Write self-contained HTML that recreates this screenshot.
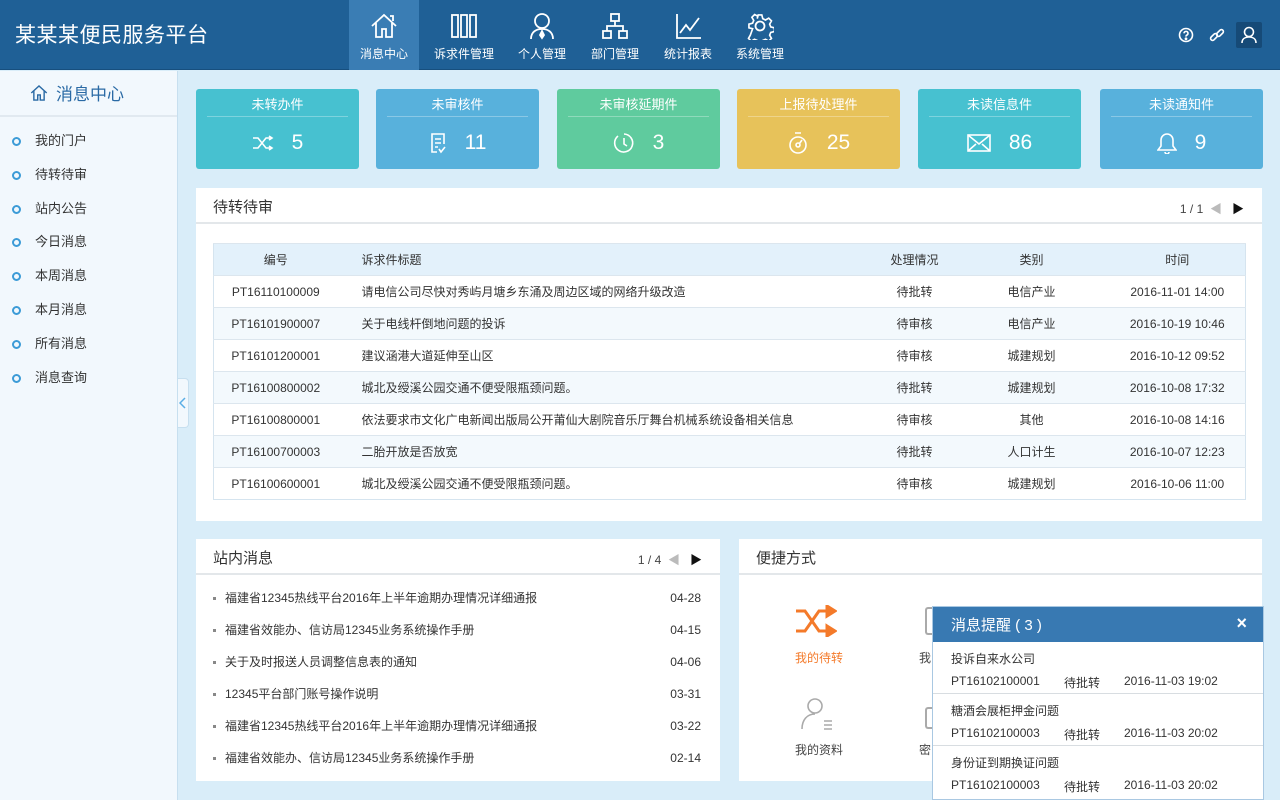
<!DOCTYPE html>
<html><head><meta charset="utf-8">
<style>
*{margin:0;padding:0;box-sizing:border-box}
body{width:1280px;height:800px;overflow:hidden;background:#d9edf9;font-family:"Liberation Sans","Noto Sans CJK SC",sans-serif;color:#333;font-size:13px;position:relative}
.hdr{position:absolute;left:0;top:0;width:1280px;height:70px;background:#1f6096;border-bottom:1px solid #174f7e}
.logo{position:absolute;left:15px;top:19px;color:#fff;font-size:21px;letter-spacing:0.5px}
.nav{position:absolute;top:0;height:70px;color:#fff;font-size:12px;text-align:center}
.nav svg{position:absolute;left:50%;top:12px;transform:translateX(-50%)}
.nav span{position:absolute;left:0;right:0;top:45px}
.side{position:absolute;left:0;top:71px;width:178px;height:729px;background:#f2f8fd;border-right:1px solid #c7dfef}
.stitle{height:46px;border-bottom:2px solid #e1e9f0;color:#2a6aa5;font-size:17px;padding:9px 0 0 56px;position:relative}
.side ul{list-style:none;margin-top:12px}
.side li{height:33.8px;padding-left:35px;position:relative;font-size:13px;color:#333;line-height:24px}
.side li:before{content:"";position:absolute;left:12px;top:8px;width:5px;height:5px;border:2px solid #3c9bd7;border-radius:50%}
.tog{position:absolute;left:178px;top:378px;width:11px;height:50px;background:#f2f8fd;border:1px solid #c7dfef;border-left:none;border-radius:0 4px 4px 0}
.card{position:absolute;top:89px;width:163px;height:80px;border-radius:3px;color:#fff;text-align:center}
.card .t{font-size:13px;margin-top:5px;height:23px;border-bottom:1px solid rgba(255,255,255,.3);margin-left:11px;margin-right:11px;}
.card .n{font-size:21px;margin-top:14px;display:flex;justify-content:center;align-items:center;gap:18px}
.panel{position:absolute;background:#fff}
.ph{height:36px;border-bottom:2px solid #e3e7ea;font-size:15px;padding:8px 0 0 17px;position:relative}
.pg{position:absolute;right:18px;top:12px;font-size:12px;color:#444}
table{border-collapse:collapse;position:absolute;left:17px;top:55px;width:1032px;font-size:12px;table-layout:fixed}
td,th{height:32px;border-top:1px solid #dce6ee;text-align:center;font-weight:normal;color:#333}
th{background:#e3f1fb;height:32px}
tr:nth-child(odd) td{background:#f3f9fd}
tr:nth-child(even) td{background:#fff}
table{border:1px solid #d5e4ef}
.l{text-align:left;padding-left:24px}
.news{list-style:none;padding:0 0 0 17px;margin-top:11px}
.news li{height:32px;line-height:24px;font-size:12px;position:relative;padding-left:12px}
.news li:before{content:"";position:absolute;left:0;top:11px;width:3px;height:3px;background:#888}
.news li b{font-weight:normal;position:absolute;right:19px;top:0}
.pop{position:absolute;left:932px;top:606px;width:332px;height:194px;background:#fff;border:1px solid #a9c8e2}
.poph{height:35px;background:#3879b2;color:#fff;font-size:15px;padding:7px 0 0 18px;position:relative}
.pi{height:52px;border-bottom:1px solid #d8dde1;padding:8px 0 0 18px;font-size:12px}
.pi div:last-child{margin-top:7px;display:flex}
</style></head><body>
<div class="hdr">
<div class="logo">某某某便民服务平台</div>
<div class="nav" style="left:349px;width:70px;background:#3a7db4"><svg width="28" height="28" viewBox="0 0 28 28" fill="none" stroke="#fff" stroke-width="1.8"><path d="M2 14 14 3 26 14M6 11v14h6v-8h4v8h6V11"/><path d="M20 4h3v5"/></svg><span>消息中心</span></div>
<div class="nav" style="left:427px;width:74px"><svg width="28" height="28" viewBox="0 0 28 28" fill="none" stroke="#fff" stroke-width="1.8"><rect x="2" y="3" width="6" height="22"/><rect x="11" y="3" width="6" height="22"/><rect x="20" y="3" width="6" height="22"/></svg><span>诉求件管理</span></div>
<div class="nav" style="left:510px;width:64px"><svg width="28" height="28" viewBox="0 0 28 28" fill="none" stroke="#fff" stroke-width="1.8"><circle cx="14" cy="9" r="7"/><path d="M3 27c0-7 5-10 11-10s11 3 11 10"/><path d="M14 19l-2 4 2 3 2-3z" fill="#fff"/></svg><span>个人管理</span></div>
<div class="nav" style="left:583px;width:64px"><svg width="28" height="28" viewBox="0 0 28 28" fill="none" stroke="#fff" stroke-width="1.8"><rect x="10" y="2" width="8" height="7"/><rect x="2" y="19" width="8" height="7"/><rect x="18" y="19" width="8" height="7"/><path d="M14 9v5M6 19v-5h16v5"/></svg><span>部门管理</span></div>
<div class="nav" style="left:656px;width:64px"><svg width="28" height="28" viewBox="0 0 28 28" fill="none" stroke="#fff" stroke-width="1.8"><path d="M3 2v24h24"/><path d="M6 21l6-8 4 5 9-12"/></svg><span>统计报表</span></div>
<div class="nav" style="left:728px;width:64px"><svg width="28" height="28" viewBox="0 0 28 28" fill="none" stroke="#fff" stroke-width="1.8"><circle cx="14" cy="14" r="4.5"/><path d="M12 2h4l1 4 3 1.5 3.5-2 3 3-2 3.5 1.2 3 4 1v4l-4 1-1.2 3 2 3.5-3 3-3.5-2-3 1.2-1 4h-4l-1-4-3-1.2-3.5 2-3-3 2-3.5L6 17l-4-1v-4l4-1 1.2-3-2-3.5 3-3 3.5 2L11 6z" transform="scale(.92) translate(1.2 1.2)"/></svg><span>系统管理</span></div>
<svg style="position:absolute;left:1178px;top:27px" width="16" height="16" viewBox="0 0 16 16" fill="none" stroke="#fff" stroke-width="1.6"><circle cx="8" cy="8" r="6.5"/><path d="M6 6.3a2 2 0 1 1 2.5 2c-.5.2-.5.7-.5 1.3"/><circle cx="8" cy="11.8" r=".6" fill="#fff"/></svg>
<svg style="position:absolute;left:1209px;top:27px" width="16" height="16" viewBox="0 0 16 16" fill="none" stroke="#fff" stroke-width="1.6"><rect x="1" y="8" width="8" height="4" rx="2" transform="rotate(-45 5 10)"/><rect x="7" y="4" width="8" height="4" rx="2" transform="rotate(-45 11 6)"/></svg>
<div style="position:absolute;left:1236px;top:22px;width:26px;height:26px;background:#164a77;border-radius:2px"><svg style="position:absolute;left:5px;top:4px" width="16" height="18" viewBox="0 0 16 18" fill="none" stroke="#fff" stroke-width="1.6"><circle cx="8" cy="6" r="4.5"/><path d="M1 17c0-4 3-6 7-6s7 2 7 6"/></svg></div>
</div>

<div class="side">
<div class="stitle"><svg style="position:absolute;left:30px;top:13px" width="18" height="18" viewBox="0 0 28 28" fill="none" stroke="#2a6aa5" stroke-width="2.2"><path d="M2 14 14 3 26 14M6 11v14h6v-8h4v8h6V11"/></svg>消息中心</div>
<ul><li>我的门户</li><li>待转待审</li><li>站内公告</li><li>今日消息</li><li>本周消息</li><li>本月消息</li><li>所有消息</li><li>消息查询</li></ul>
</div>
<div class="tog"><svg style="position:absolute;left:1px;top:18px" width="8" height="12" viewBox="0 0 8 12" fill="none" stroke="#5aaee6" stroke-width="1.5"><path d="M6 1 1 6l5 5"/></svg></div>

<div class="card" style="left:196px;background:#47c1d0"><div class="t">未转办件</div><div class="n"><svg width="22" height="18" viewBox="0 0 22 18" fill="none" stroke="#fff" stroke-width="1.6"><path d="M1 4h5l8 10h5M1 14h5l8-10h5M17 2l3 2-3 2M17 12l3 2-3 2"/></svg>5</div></div>
<div class="card" style="left:376px;background:#58b1dc"><div class="t">未审核件</div><div class="n"><svg width="18" height="22" viewBox="0 0 18 22" fill="none" stroke="#fff" stroke-width="1.6"><path d="M8 20H3V2h12v10"/><path d="M6 7h6M6 11h6M6 15h3M10 17l2 3 4-5"/></svg>11</div></div>
<div class="card" style="left:557px;background:#5fcb9e"><div class="t">未审核延期件</div><div class="n"><svg width="22" height="22" viewBox="0 0 22 22" fill="none" stroke="#fff" stroke-width="1.6"><path d="M5 4a9 9 0 1 0 6-2"/><path d="M11 6v6l3 2"/></svg>3</div></div>
<div class="card" style="left:737px;background:#e7c25a"><div class="t">上报待处理件</div><div class="n"><svg width="22" height="24" viewBox="0 0 22 24" fill="none" stroke="#fff" stroke-width="1.6"><circle cx="11" cy="14" r="8"/><circle cx="11" cy="14" r="2"/><path d="M8 2h6M12.5 12.5 15 9"/></svg>25</div></div>
<div class="card" style="left:918px;background:#47c1d0"><div class="t">未读信息件</div><div class="n"><svg width="24" height="18" viewBox="0 0 24 18" fill="none" stroke="#fff" stroke-width="1.6"><rect x="1" y="1" width="22" height="16"/><path d="M1 1l11 9 11-9M1 17l8-7M23 17l-8-7"/></svg>86</div></div>
<div class="card" style="left:1100px;background:#58b1dc"><div class="t">未读通知件</div><div class="n"><svg width="20" height="22" viewBox="0 0 20 22" fill="none" stroke="#fff" stroke-width="1.6"><path d="M10 2a6 6 0 0 0-6 6v6l-3 4h18l-3-4V8a6 6 0 0 0-6-6zM8 20a2 2 0 0 0 4 0"/></svg>9</div></div>

<div class="panel" style="left:196px;top:188px;width:1066px;height:333px">
<div class="ph">待转待审<div class="pg">1 / 1 &nbsp;<span style="color:#bbb">◀</span>&nbsp;&nbsp; <span style="color:#111">▶</span></div></div>
<table>
<colgroup><col style="width:124px"><col style="width:538px"><col style="width:78px"><col style="width:156px"><col style="width:136px"></colgroup>
<tr><th>编号</th><th class="l">诉求件标题</th><th>处理情况</th><th>类别</th><th>时间</th></tr>
<tr><td>PT16110100009</td><td class="l">请电信公司尽快对秀屿月塘乡东涌及周边区域的网络升级改造</td><td>待批转</td><td>电信产业</td><td>2016-11-01 14:00</td></tr>
<tr><td>PT16101900007</td><td class="l">关于电线杆倒地问题的投诉</td><td>待审核</td><td>电信产业</td><td>2016-10-19 10:46</td></tr>
<tr><td>PT16101200001</td><td class="l">建议涵港大道延伸至山区</td><td>待审核</td><td>城建规划</td><td>2016-10-12 09:52</td></tr>
<tr><td>PT16100800002</td><td class="l">城北及绶溪公园交通不便受限瓶颈问题。</td><td>待批转</td><td>城建规划</td><td>2016-10-08 17:32</td></tr>
<tr><td>PT16100800001</td><td class="l">依法要求市文化广电新闻出版局公开莆仙大剧院音乐厅舞台机械系统设备相关信息</td><td>待审核</td><td>其他</td><td>2016-10-08 14:16</td></tr>
<tr><td>PT16100700003</td><td class="l">二胎开放是否放宽</td><td>待批转</td><td>人口计生</td><td>2016-10-07 12:23</td></tr>
<tr><td>PT16100600001</td><td class="l">城北及绶溪公园交通不便受限瓶颈问题。</td><td>待审核</td><td>城建规划</td><td>2016-10-06 11:00</td></tr>
</table>
</div>

<div class="panel" style="left:196px;top:539px;width:524px;height:242px">
<div class="ph">站内消息<div class="pg">1 / 4 &nbsp;<span style="color:#bbb">◀</span>&nbsp;&nbsp; <span style="color:#111">▶</span></div></div>
<ul class="news">
<li>福建省12345热线平台2016年上半年逾期办理情况详细通报<b>04-28</b></li>
<li>福建省效能办、信访局12345业务系统操作手册<b>04-15</b></li>
<li>关于及时报送人员调整信息表的通知<b>04-06</b></li>
<li>12345平台部门账号操作说明<b>03-31</b></li>
<li>福建省12345热线平台2016年上半年逾期办理情况详细通报<b>03-22</b></li>
<li>福建省效能办、信访局12345业务系统操作手册<b>02-14</b></li>
</ul>
</div>

<div class="panel" style="left:739px;top:539px;width:523px;height:242px">
<div class="ph">便捷方式</div>
<svg style="position:absolute;left:56px;top:66px" width="42" height="32" viewBox="0 0 42 32" fill="none" stroke="#f47a2a" stroke-width="3"><path d="M1 6h9l14 20h10M1 26h9l14-20h10"/><path d="M32 1l8 5-8 5zM32 21l8 5-8 5z" fill="#f47a2a"/></svg>
<div style="position:absolute;left:56px;top:110px;color:#f47a2a;font-size:12px">我的待转</div>
<div style="position:absolute;left:180px;top:110px;color:#444;font-size:12px">我的</div>
<div style="position:absolute;left:186px;top:68px;width:8px;height:28px;border:2px solid #aaa;border-right:none;border-radius:3px 0 0 3px"></div>
<svg style="position:absolute;left:60px;top:158px" width="36" height="36" viewBox="0 0 36 36" fill="none" stroke="#aaa" stroke-width="1.6"><circle cx="16" cy="9" r="7"/><path d="M3 32c0-9 5-15 13-15"/><path d="M25 24h8M25 28h8M25 32h8"/></svg>
<div style="position:absolute;left:56px;top:202px;color:#444;font-size:12px">我的资料</div>
<div style="position:absolute;left:180px;top:202px;color:#444;font-size:12px">密</div>
<div style="position:absolute;left:186px;top:168px;width:8px;height:22px;border:2px solid #aaa;border-right:none;border-radius:3px 0 0 3px"></div>
</div>

<div class="pop">
<div class="poph">消息提醒 ( 3 )<span style="position:absolute;right:16px;top:6px;font-size:18px;font-weight:bold">×</span></div>
<div class="pi"><div>投诉自来水公司</div><div><span style="width:113px">PT16102100001</span><span style="width:60px">待批转</span><span>2016-11-03 19:02</span></div></div>
<div class="pi"><div>糖酒会展柜押金问题</div><div><span style="width:113px">PT16102100003</span><span style="width:60px">待批转</span><span>2016-11-03 20:02</span></div></div>
<div class="pi" style="border:none"><div>身份证到期换证问题</div><div><span style="width:113px">PT16102100003</span><span style="width:60px">待批转</span><span>2016-11-03 20:02</span></div></div>
</div>
</body></html>
